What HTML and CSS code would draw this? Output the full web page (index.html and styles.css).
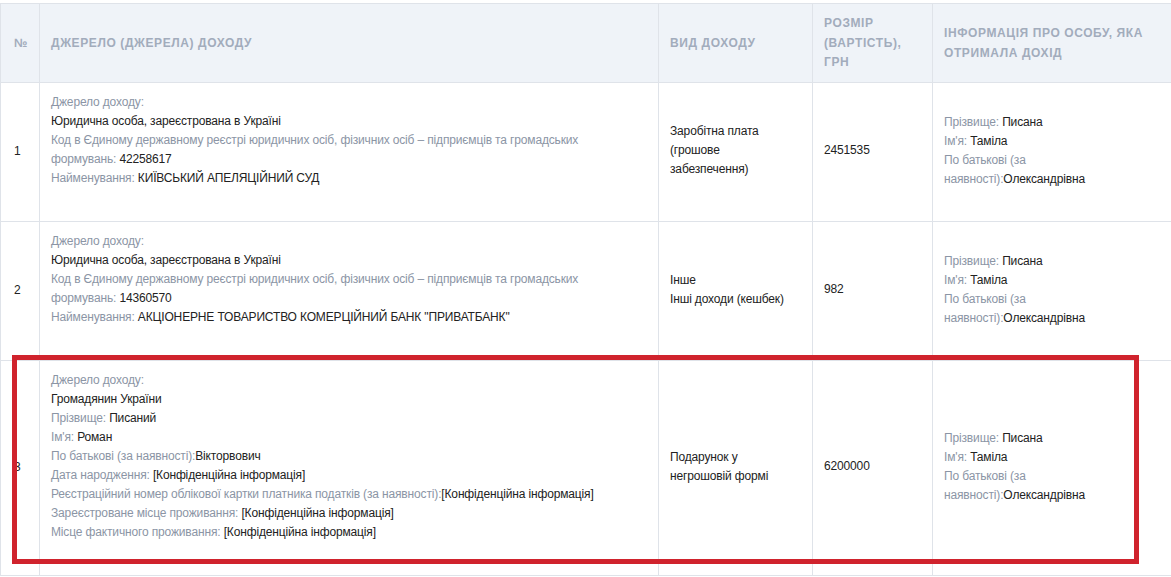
FILE: index.html
```html
<!DOCTYPE html>
<html lang="uk">
<head>
<meta charset="utf-8">
<title>Доходи</title>
<link rel="stylesheet" href="styles.css">
</head>
<body>
<div class="wrap">
<table class="income">
  <colgroup>
    <col class="c-num"><col class="c-src"><col class="c-type"><col class="c-sum"><col class="c-info">
  </colgroup>
  <thead>
    <tr>
      <th>№</th>
      <th>Джерело (джерела) доходу</th>
      <th>Вид доходу</th>
      <th>Розмір (вартість), грн</th>
      <th>Інформація про особу, яка отримала дохід</th>
    </tr>
  </thead>
  <tbody>
    <tr>
      <td class="num">1</td>
      <td class="src">
        <div class="lbl">Джерело доходу:</div>
        <div class="val">Юридична особа, зареєстрована в Україні</div>
        <div><span class="lbl">Код в Єдиному державному реєстрі юридичних осіб, фізичних осіб – підприємців та громадських формувань: </span><span class="val">42258617</span></div>
        <div><span class="lbl">Найменування: </span><span class="val">КИЇВСЬКИЙ АПЕЛЯЦІЙНИЙ СУД</span></div>
      </td>
      <td class="val">Заробітна плата (грошове забезпечення)</td>
      <td class="val">2451535</td>
      <td class="info">
        <div><span class="lbl">Прізвище: </span><span class="val">Писана</span></div>
        <div><span class="lbl">Ім'я: </span><span class="val">Таміла</span></div>
        <div><span class="lbl">По батькові (за наявності):</span><span class="val">Олександрівна</span></div>
      </td>
    </tr>
    <tr>
      <td class="num">2</td>
      <td class="src">
        <div class="lbl">Джерело доходу:</div>
        <div class="val">Юридична особа, зареєстрована в Україні</div>
        <div><span class="lbl">Код в Єдиному державному реєстрі юридичних осіб, фізичних осіб – підприємців та громадських формувань: </span><span class="val">14360570</span></div>
        <div><span class="lbl">Найменування: </span><span class="val">АКЦІОНЕРНЕ ТОВАРИСТВО КОМЕРЦІЙНИЙ БАНК "ПРИВАТБАНК"</span></div>
      </td>
      <td class="val">Інше<br>Інші доходи (кешбек)</td>
      <td class="val">982</td>
      <td class="info">
        <div><span class="lbl">Прізвище: </span><span class="val">Писана</span></div>
        <div><span class="lbl">Ім'я: </span><span class="val">Таміла</span></div>
        <div><span class="lbl">По батькові (за наявності):</span><span class="val">Олександрівна</span></div>
      </td>
    </tr>
    <tr>
      <td class="num">3</td>
      <td class="src">
        <div class="lbl">Джерело доходу:</div>
        <div class="val">Громадянин України</div>
        <div><span class="lbl">Прізвище: </span><span class="val">Писаний</span></div>
        <div><span class="lbl">Ім'я: </span><span class="val">Роман</span></div>
        <div><span class="lbl">По батькові (за наявності):</span><span class="val">Вікторвович</span></div>
        <div><span class="lbl">Дата народження: </span><span class="val">[Конфіденційна інформація]</span></div>
        <div><span class="lbl">Реєстраційний номер облікової картки платника податків (за наявності):</span><span class="val">[Конфіденційна інформація]</span></div>
        <div><span class="lbl">Зареєстроване місце проживання: </span><span class="val">[Конфіденційна інформація]</span></div>
        <div><span class="lbl">Місце фактичного проживання: </span><span class="val">[Конфіденційна інформація]</span></div>
      </td>
      <td class="val">Подарунок у негрошовій формі</td>
      <td class="val">6200000</td>
      <td class="info">
        <div><span class="lbl">Прізвище: </span><span class="val">Писана</span></div>
        <div><span class="lbl">Ім'я: </span><span class="val">Таміла</span></div>
        <div><span class="lbl">По батькові (за наявності):</span><span class="val">Олександрівна</span></div>
      </td>
    </tr>
  </tbody>
</table>
<div class="highlight"></div>
</div>
</body>
</html>
```

FILE: styles.css
```css
html, body {
  margin: 0;
  padding: 0;
  background: #ffffff;
  overflow: hidden;
}
body {
  font-family: "Liberation Sans", Arial, sans-serif;
  font-size: 12px;
  color: #222222;
}
.wrap {
  position: relative;
  padding-top: 3px;
  width: 1180px;
}
.income {
  border-collapse: collapse;
  table-layout: fixed;
  width: 1180px;
  border: 1px solid #dfe3e9;
}
.c-num { width: 39px; }
.c-src { width: 619px; }
.c-type { width: 154px; }
.c-sum { width: 120px; }
.c-info { width: 248px; }
.income th {
  background: #eff3f8;
  color: #a2acbc;
  font-weight: bold;
  font-size: 12px;
  letter-spacing: 0.6px;
  text-transform: uppercase;
  text-align: left;
  vertical-align: middle;
  line-height: 19.5px;
  padding: 10px 12px 9px 11px;
  border: 1px solid #dfe3e9;
  height: 59px;
}
.income th:first-child {
  padding-left: 13px;
}
.income th:last-child {
  padding-right: 33px;
}
.income td {
  border: 1px solid #dfe3e9;
  padding: 9px 12px 12px 11px;
  vertical-align: middle;
  line-height: 19px;
  text-align: left;
  letter-spacing: -0.15px;
}
.income td.src {
  vertical-align: top;
  padding: 10px 50px 33px 11px;
}
.income td.num {
  color: #222222;
  padding-left: 13px;
  padding-top: 10px;
}
.lbl {
  color: #8b95a5;
}
.val {
  color: #222222;
}
.highlight {
  position: absolute;
  left: 12px;
  top: 355px;
  width: 1117px;
  height: 199px;
  border: 5px solid #d0232d;
  pointer-events: none;
}
```
